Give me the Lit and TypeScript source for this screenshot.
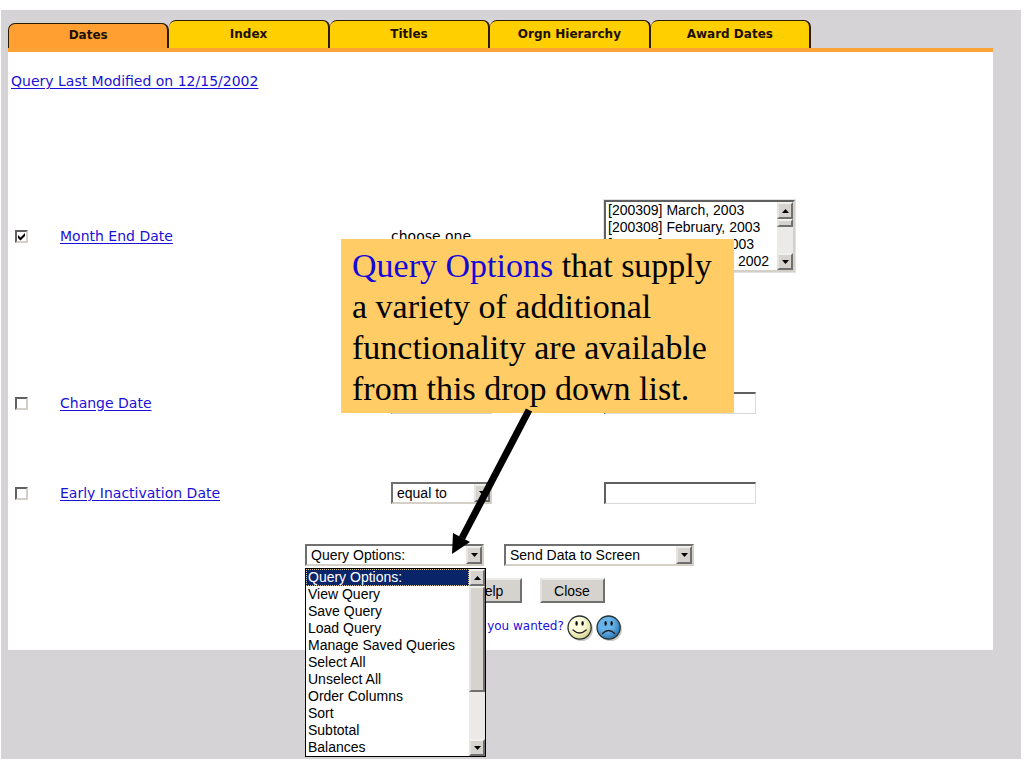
import { LitElement, html, css, svg } from "lit";
import { customElement, property, state } from "lit/decorators.js";
import { classMap } from "lit/directives/class-map.js";

const up = html`<svg viewBox="0 0 7 4" width="7" height="4" aria-hidden="true"><path d="M0 4L3.5 0L7 4Z" /></svg>`;
const down = html`<svg viewBox="0 0 7 4" width="7" height="4" aria-hidden="true"><path d="M0 0H7L3.5 4Z" /></svg>`;

/** Classic drop-down: sunken box with a raised arrow button. */
@customElement("drop-down")
class DropDown extends LitElement {
  @property() label = "";
  @property({ type: Array }) options: string[] = [];

  static styles = css`
    :host { display: block; }
    .box {
      display: grid;
      grid-template-columns: 1fr 16px;
      height: 22px;
      box-sizing: border-box;
      border: 2px solid;
      border-color: #707070 #d4d0c8 #d4d0c8 #707070;
      background: #fff;
    }
    .field {
      grid-area: 1 / 1 / 2 / 3;
      appearance: none;
      border: 0;
      margin: 0;
      padding: 0 18px 0 4px;
      background: transparent;
      color: #000;
      font: 14px/18px "Liberation Sans", Arial, sans-serif;
      outline: none;
      min-width: 0;
    }
    .arrow {
      grid-area: 1 / 2 / 2 / 3;
      display: grid;
      place-items: center;
      pointer-events: none;
      box-sizing: border-box;
      background: #d6d3ce;
      border: 2px solid;
      border-color: #f0f0ec #707070 #707070 #e6e4e0;
    }
  `;

  render() {
    return html`<div class="box">
      <select class="field" aria-label=${this.label}>
        ${this.options.map((o) => html`<option>${o}</option>`)}
      </select>
      <span class="arrow">${down}</span>
    </div>`;
  }
}

/** List of choices with a scroll bar beside it. */
@customElement("scroll-list")
class ScrollList extends LitElement {
  @property() label = "";
  @property({ type: Array }) options: string[] = [];
  @property({ type: Number }) rows = 4;
  @property({ type: Number }) thumb = 8;
  @property({ type: Number }) selected = -1;
  @property({ type: Boolean }) popup = false;

  static styles = css`
    :host { display: block; }
    .box {
      display: flex;
      box-sizing: border-box;
      border: 2px solid;
      border-color: #606060 #d4d0c8 #d4d0c8 #606060;
      outline: 1px solid #e4e2e0;
      background: #fff;
    }
    .popup { border: 1px solid #000; outline: none; }
    .list {
      flex: 1;
      min-width: 0;
      border: 0;
      margin: 0;
      padding: 0;
      border-radius: 0;
      outline: none;
      background: #fff;
      color: #000;
      overflow: hidden;
      font: 14px/17px "Liberation Sans", Arial, sans-serif;
    }
    .list option {
      height: 17px;
      min-height: 17px;
      line-height: 17px;
      padding: 0 2px;
      box-sizing: border-box;
    }
    .list option:checked {
      background: #0a246a;
      color: #fff;
      outline: 1px dotted #d8c890;
      outline-offset: -1px;
    }
    .bar {
      width: 16px;
      display: flex;
      flex-direction: column;
      background: #eceae8;
    }
    .step, .thumb {
      box-sizing: border-box;
      background: #d6d3ce;
      border: 2px solid;
      border-color: #f0f0ec #707070 #707070 #e6e4e0;
    }
    .step { height: 17px; display: grid; place-items: center; }
    .rest { flex: 1; }
  `;

  render() {
    return html`<div class=${classMap({ box: true, popup: this.popup })}>
      <select class="list" size=${this.rows} aria-label=${this.label}>
        ${this.options.map((o, i) => html`<option ?selected=${i === this.selected}>${o}</option>`)}
      </select>
      <div class="bar" aria-hidden="true">
        <span class="step">${up}</span>
        <span class="thumb" style="height:${this.thumb}px"></span>
        <span class="rest"></span>
        <span class="step">${down}</span>
      </div>
    </div>`;
  }
}

const comparisons = ["equal to", "not equal to", "before", "after"];
const months = ["[200309] March, 2003", "[200308] February, 2003", "[200307] January, 2003", "[200306] December, 2002"];
const queryOptions = [
  "Query Options:", "View Query", "Save Query", "Load Query", "Manage Saved Queries",
  "Select All", "Unselect All", "Order Columns", "Sort", "Subtotal", "Balances",
];

@customElement("app-root")
class AppRoot extends LitElement {
  @state() tab = "Dates";

  static styles = css`
    :host {
      display: block;
      box-sizing: border-box;
      min-height: 100vh;
      padding: 10px 3px 9px 1px;
      background: #fff;
      color: #000;
      font: 14px/20px "DejaVu Sans", Verdana, sans-serif;
    }
    .page {
      box-sizing: border-box;
      min-height: calc(100vh - 19px);
      padding: 10px 28px 0 7px;
      background: #d5d3d6;
    }
    a { color: #1a10d8; text-decoration: underline; text-underline-offset: 2px; }
    .tabs { display: flex; align-items: flex-end; height: 28px; max-width: 803px; }
    .tab {
      flex: 1 1 0;
      height: 28px;
      box-sizing: border-box;
      margin: 0;
      padding: 0 0 2px;
      border: 1px solid #2a1a00;
      border-left-width: 0;
      border-right-width: 2px;
      border-bottom: 0;
      border-radius: 7px 7px 0 0;
      background: #ffcf00;
      color: #1c1000;
      font: bold 12px/16px "DejaVu Sans", Verdana, sans-serif;
      white-space: nowrap;
    }
    .active { height: 25px; background: #ff9f31; border-left-width: 1px; }
    .sheet {
      position: relative;
      background: #fff;
      border-top: 4px solid #fba336;
      padding: 19px 0 9px;
    }
    .modified { padding: 0 3px 50px; }
    .row {
      display: grid;
      grid-template-columns: 45px 331px 213px 1fr;
      align-items: center;
      padding-left: 7px;
    }
    .tall { min-height: 190px; }
    .middle { min-height: 144px; }
    .short { min-height: 36px; }
    .tick {
      appearance: none;
      width: 13px;
      height: 13px;
      margin: 0;
      grid-area: 1 / 1;
      border: 2px solid;
      border-color: #606060 #d4d0c8 #d4d0c8 #606060;
      background: #fff;
    }
    .check { display: grid; width: 13px; height: 13px; }
    .check svg { grid-area: 1 / 1; display: none; pointer-events: none; z-index: 1; }
    .tick:checked + svg { display: block; }
    .compare { width: 101px; }
    .months { width: 191px; }
    .entry {
      width: 152px;
      height: 22px;
      box-sizing: border-box;
      border: 2px solid;
      border-color: #606060 #dcdad6 #dcdad6 #606060;
      border-right-width: 1px;
      border-bottom-width: 1px;
      background: #fff;
      padding: 0 3px;
      font: 14px/18px "Liberation Sans", Arial, sans-serif;
    }
    .actions { display: flex; justify-content: center; gap: 20px; padding: 33px 2px 0 0; }
    .query { position: relative; width: 179px; }
    .menu { position: absolute; z-index: 2; top: 100%; left: 0; width: 181px; margin-top: 2px; }
    .send { width: 190px; }
    .buttons { display: flex; justify-content: center; gap: 18px; padding: 12px 0 12px 60px; }
    .push {
      width: 65px;
      height: 25px;
      padding: 0;
      border: 2px solid;
      border-color: #eceae8 #707070 #707070 #e4e2e0;
      background: #d6d3ce;
      color: #000;
      font: 14px/20px "Liberation Sans", Arial, sans-serif;
    }
    .feedback {
      display: flex;
      justify-content: center;
      gap: 3px;
      height: 26px;
      padding-left: 108px;
      color: #1a10d8;
      font-size: 12px;
      line-height: 22px;
    }
    .face { border: 0; padding: 0; margin: 0; background: none; width: 26px; height: 26px; }
    .face svg { display: block; }
    .callout {
      position: absolute;
      z-index: 3;
      left: 333px;
      top: 187px;
      width: 393px;
      box-sizing: border-box;
      padding: 6px 10px 4px 11px;
      margin: 0;
      background: #ffcc66;
      font: 34px/41px "Liberation Serif", "Times New Roman", serif;
      white-space: nowrap;
    }
    .key { color: #1408d8; }
    .pointer { position: absolute; left: 111px; top: 168px; overflow: visible; pointer-events: none; }
  `;

  tick(id: string, checked: boolean) {
    return html`<span class="check">
      <input class="tick" type="checkbox" aria-labelledby=${id} .checked=${checked} />
      <svg viewBox="0 0 13 13" width="13" height="13" aria-hidden="true">
        <path d="M3 5V8L5.5 10.5L10 6V3L5.5 7.5Z" />
      </svg>
    </span>`;
  }

  dateRow(id: string, name: string, size: string) {
    return html`<div class="row ${size}">
      ${this.tick(id, false)}
      <span><a href="#" id=${id}>${name}</a></span>
      <drop-down class="compare" .label=${name + " comparison"} .options=${comparisons}></drop-down>
      <input class="entry" type="text" aria-labelledby=${id} />
    </div>`;
  }

  face(name: string, light: string, dark: string, mouth: string) {
    return html`<button class="face" aria-label=${name}>
      <svg viewBox="0 0 26 26" width="26" height="26">
        <defs>
          <radialGradient id="shade-${name}" cx="40%" cy="35%" r="65%">
            <stop offset="45%" stop-color=${light} /><stop offset="100%" stop-color=${dark} />
          </radialGradient>
        </defs>
        <circle cx="14.5" cy="14.5" r="11.5" fill="#aaa69c" opacity=".6" />
        <circle cx="12.6" cy="12.6" r="11.6" fill="url(#shade-${name})" stroke="#26312f" stroke-width="1.3" />
        <ellipse cx="9.6" cy="8.4" rx="1.2" ry="2.3" fill="#111" />
        <ellipse cx="15.6" cy="8.4" rx="1.2" ry="2.3" fill="#111" />
        <path d=${mouth} fill="none" stroke="#222" stroke-width="1.3" stroke-linecap="round" />
      </svg>
    </button>`;
  }

  render() {
    const tabs = ["Dates", "Index", "Titles", "Orgn Hierarchy", "Award Dates"];
    return html`<main class="page">
      <nav class="tabs" role="tablist">
        ${tabs.map((t) => html`<button
          role="tab"
          aria-selected=${t === this.tab}
          class=${classMap({ tab: true, active: t === this.tab })}
          @click=${() => (this.tab = t)}
        >${t}</button>`)}
      </nav>
      <section class="sheet">
        <div class="modified"><a href="#">Query Last Modified on 12/15/2002</a></div>
        <div class="row tall">
          ${this.tick("month-end", true)}
          <span><a href="#" id="month-end">Month End Date</a></span>
          <span>choose one</span>
          <scroll-list class="months" label="Month End Date" .options=${months}></scroll-list>
        </div>
        ${this.dateRow("change", "Change Date", "middle")}
        ${this.dateRow("inactivation", "Early Inactivation Date", "short")}
        <div class="actions">
          <div class="query">
            <drop-down label="Query options" .options=${queryOptions}></drop-down>
            <scroll-list class="menu" popup label="Query options list" .options=${queryOptions}
              .rows=${11} .thumb=${106} .selected=${0}></scroll-list>
          </div>
          <drop-down class="send" label="Output" .options=${["Send Data to Screen"]}></drop-down>
        </div>
        <div class="buttons">
          <button class="push">Help</button>
          <button class="push">Close</button>
        </div>
        <div class="feedback">
          <span>you wanted?</span>
          ${this.face("Yes", "#ffffe0", "#d8d490", "M6 15Q12.6 21 19.2 15")}
          ${this.face("No", "#68b4ea", "#2f78b4", "M6.5 18.5Q12.6 12.5 18.7 18.5")}
        </div>
        <p class="callout">
          <span class="key">Query Options</span> that supply<br />a variety of additional<br />functionality
          are available<br />from this drop down list.
          <svg class="pointer" viewBox="0 0 82 150" width="82" height="150" aria-hidden="true">
            ${svg`<path d="M77 3L10 131" stroke="#000" stroke-width="7" fill="none" /><path d="M0 147L1 126L18 135Z" />`}
          </svg>
        </p>
      </section>
    </main>`;
  }
}
